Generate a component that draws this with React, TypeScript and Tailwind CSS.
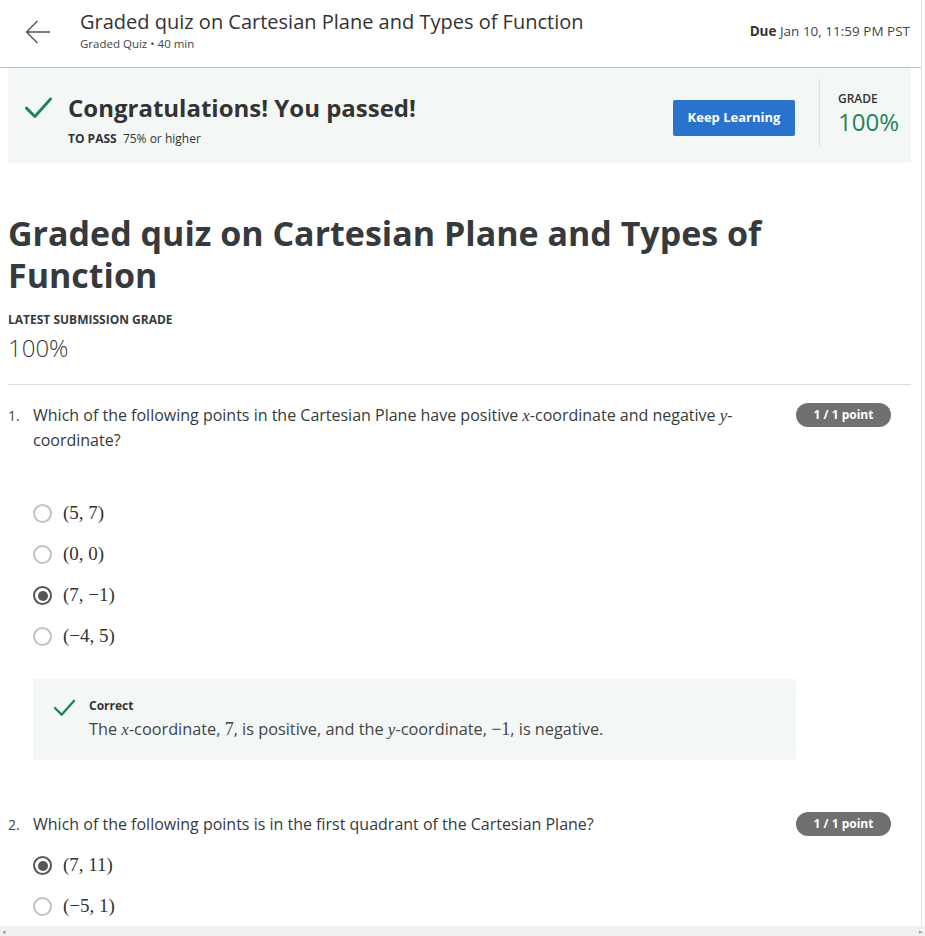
import type { ReactNode } from 'react';

const sans = "font-['Open_Sans',sans-serif]";
const math = "font-['Liberation_Serif',serif]";

function Check({ className }: { className: string }) {
  return (
    <svg viewBox="0 0 24 24" className={className} fill="none" stroke="#1f8354" strokeWidth="2.4" strokeLinecap="round" strokeLinejoin="round">
      <path d="M2 12.5 L9 19.5 L22 5" />
    </svg>
  );
}

function Radio({ checked }: { checked?: boolean }) {
  return checked ? (
    <span className="w-[19px] h-[19px] rounded-full border-2 border-[#555] flex items-center justify-center shrink-0">
      <span className="w-[10px] h-[10px] rounded-full bg-[#555]" />
    </span>
  ) : (
    <span className="w-[19px] h-[19px] rounded-full border-2 border-[#c2c2c2] shrink-0" />
  );
}

function Option({ checked, children }: { checked?: boolean; children: ReactNode }) {
  return (
    <div className="flex items-center gap-[11px] h-[41px] pl-[33px]">
      <Radio checked={checked} />
      <span className={`${math} text-[19px] text-[#333]`}>{children}</span>
    </div>
  );
}

function Badge() {
  return (
    <span className="bg-[#707070] text-white text-[12px] font-bold rounded-full h-[24px] w-[95px] flex items-center justify-center shrink-0">
      1 / 1 point
    </span>
  );
}

const I = ({ children }: { children: ReactNode }) => <span className={`${math} italic text-[17px] leading-none`}>{children}</span>;
const M = ({ children }: { children: ReactNode }) => <span className={`${math} text-[18px] leading-none`}>{children}</span>;

export default function App() {
  return (
    <div className={`${sans} w-[925px] h-[936px] overflow-hidden bg-white text-[#1f1f1f] flex flex-col`}>
      <div className="flex-1 overflow-hidden flex">
        <div className="flex-1">
          {/* top bar */}
          <div className="h-[68px] border-b border-[#b9bfbf] flex items-start">
            <div className="w-[80px] h-full flex items-start pt-[19px] pl-[25px]">
              <svg viewBox="0 0 26 26" className="w-[26px] h-[26px]" fill="none" stroke="#555" strokeWidth="1.4">
                <path d="M25 13 H1.5 M12.5 2 L1.5 13 L12.5 24" />
              </svg>
            </div>
            <div className="flex-1 pt-[8px]">
              <div className="text-[20px] leading-[28px] text-[#333]">Graded quiz on Cartesian Plane and Types of Function</div>
              <div className="text-[11.5px] leading-[16px] text-[#444]">Graded Quiz • 40 min</div>
            </div>
            <div className="pt-[21px] pr-[11px] text-[13.5px] text-[#444]">
              <span className="font-bold text-[#333]">Due</span> Jan 10, 11:59 PM PST
            </div>
          </div>

          {/* banner */}
          <div className="ml-[8px] mr-[10px] h-[95px] bg-[#f3f8f7] flex items-center">
            <div className="pl-[16px] flex-1 flex items-start">
              <Check className="w-[29px] h-[29px] mt-[9px] mr-[15px]" />
              <div className="pt-[7px]">
                <div className="text-[24px] leading-[34px] font-bold text-[#333]">Congratulations! You passed!</div>
                <div className="text-[12px] mt-[5px] text-[#333]">
                  <span className="font-bold">TO PASS</span>&nbsp; 75% or higher
                </div>
              </div>
            </div>
            <button className="bg-[#2a73cc] text-white text-[13px] font-bold w-[122px] h-[36px] rounded-[2px] mr-[24px] mt-[4px]">Keep Learning</button>
            <div className="w-px h-[67px] bg-[#dde1e1] mb-[6px]" />
            <div className="w-[91px] pl-[18px] pb-[6px]">
              <div className="text-[12px] font-semibold text-[#333]">GRADE</div>
              <div className="text-[24px] leading-[28px] text-[#1f8354]">100%</div>
            </div>
          </div>

          {/* heading */}
          <div className="pl-[8px] pr-[10px] pt-[49px]">
            <h1 className="text-[34px] leading-[42px] font-bold text-[#373a3c] max-w-[800px]">
              Graded quiz on Cartesian Plane and Types of Function
            </h1>
            <div className="mt-[15px] text-[12px] font-bold text-[#373a3c]">LATEST SUBMISSION GRADE</div>
            <div className="text-[24px] leading-[32px] text-[#373a3c] mt-[3px] font-light">100%</div>
            <div className="mt-[20px] border-t border-[#dcdcdc]" />
          </div>

          {/* question 1 */}
          <div className="px-[8px] pt-[18px] flex items-start">
            <span className="w-[25px] text-[14px] leading-[25px] text-[#444]">1.</span>
            <div className="flex-1 text-[16px] leading-[25px] text-[#373a3c] pr-[40px]">
              Which of the following points in the Cartesian Plane have positive <I>x</I>-coordinate and negative <I>y</I>-coordinate?
            </div>
            <div className="mr-[22px]"><Badge /></div>
          </div>
          <div className="mt-[40px]">
            <Option>(5, 7)</Option>
            <Option>(0, 0)</Option>
            <Option checked>(7, −1)</Option>
            <Option>(−4, 5)</Option>
          </div>
          <div className="ml-[33px] w-[763px] mt-[22px] h-[81px] bg-[#f3f8f7] flex items-start pt-[18px] pl-[20px]">
            <Check className="w-[23px] h-[23px] mr-[13px] mt-[-1px]" />
            <div>
              <div className="text-[12px] font-bold text-[#333] leading-[18px]">Correct</div>
              <div className="text-[16.3px] text-[#444] leading-[26px] mt-[1px]">
                The <I>x</I>-coordinate, <M>7</M>, is positive, and the <I>y</I>-coordinate, <M>−1</M>, is negative.
              </div>
            </div>
          </div>

          {/* question 2 */}
          <div className="px-[8px] pt-[52px] flex items-start">
            <span className="w-[25px] text-[14px] leading-[25px] text-[#444]">2.</span>
            <div className="flex-1 text-[16px] leading-[25px] text-[#373a3c]">
              Which of the following points is in the first quadrant of the Cartesian Plane?
            </div>
            <div className="mr-[22px]"><Badge /></div>
          </div>
          <div className="mt-[8px]">
            <Option checked>(7, 11)</Option>
            <Option>(−5, 1)</Option>
          </div>
        </div>
        <div className="w-[4px] border-l border-[#e6e6e6]" />
      </div>
      {/* horizontal scrollbar */}
      <div className="h-[10px] bg-[#f0f0f0] flex items-center justify-between px-[2px] text-[7px] text-[#a0a0a0] leading-none">
        <span>◂</span>
        <span>▸</span>
      </div>
    </div>
  );
}
